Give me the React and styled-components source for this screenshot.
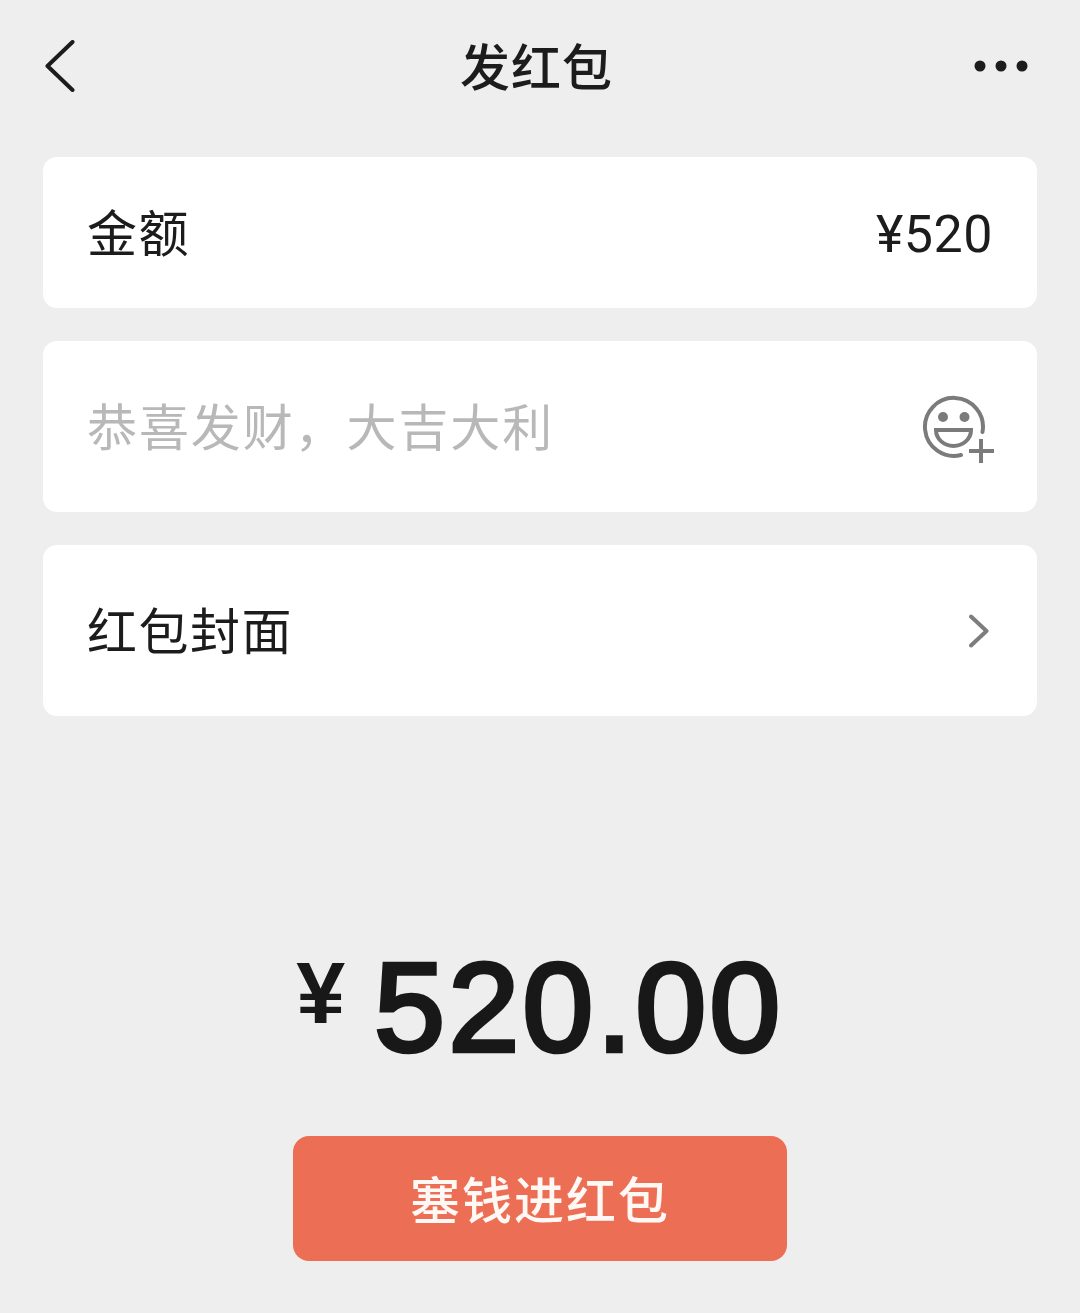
import React from 'react';
import styled, { createGlobalStyle } from 'styled-components';

const GlobalStyle = createGlobalStyle`
  html, body {
    margin: 0;
    padding: 0;
    background: #eeeeee;
  }
  body {
    font-family: "Noto Sans CJK SC", "Noto Sans", sans-serif;
  }
`;

const Page = styled.div`
  width: 1080px;
  height: 1313px;
  background: #eeeeee;
  overflow: hidden;
  display: flex;
  flex-direction: column;
  align-items: center;
`;

const Header = styled.header`
  width: 100%;
  height: 157px;
  box-sizing: border-box;
  padding: 0 52px 26px 45px;
  display: grid;
  grid-template-columns: 1fr auto 1fr;
  align-items: center;
`;

const Title = styled.h1`
  margin: 0 0 4px;
  font-size: 50px;
  line-height: 60px;
  font-weight: 500;
  letter-spacing: 1px;
  color: #1c1c1c;
`;

const MoreSlot = styled.div`
  display: flex;
  justify-content: flex-end;
`;

const CardList = styled.div`
  display: flex;
  flex-direction: column;
  gap: 33px;
  width: 994px;
`;

const Card = styled.div`
  height: ${(p) => p.$height}px;
  box-sizing: border-box;
  padding: 0 44px;
  background: #ffffff;
  border-radius: 14px;
  display: flex;
  align-items: center;
  justify-content: space-between;
`;

const Label = styled.span`
  padding-bottom: 6px;
  font-size: 50px;
  line-height: 60px;
  letter-spacing: ${(p) => (p.$muted ? '1.9px' : '1.5px')};
  color: ${(p) => (p.$muted ? '#b8b8b8' : '#1c1c1c')};
`;

const Price = styled.span`
  padding-top: 3px;
  font-family: Roboto, sans-serif;
  font-size: 52px;
  letter-spacing: 0.5px;
  color: #1c1c1c;
`;

const Total = styled.div`
  margin-top: 239px;
  height: 110px;
  display: flex;
  align-items: flex-start;
  gap: 29px;
  color: #181818;
  font-family: "Liberation Sans", Arial, sans-serif;
`;

const Currency = styled.span`
  margin-top: -4px;
  font-size: 88px;
  line-height: 84px;
  font-weight: 700;
`;

const Digits = styled.span`
  font-size: 127px;
  line-height: 104px;
  letter-spacing: 3.5px;
  -webkit-text-stroke: 4.5px #181818;
`;

const SubmitButton = styled.button`
  margin-top: 71px;
  width: 494px;
  height: 125px;
  padding: 0 0 4px;
  border: none;
  border-radius: 16px;
  background: #ec6e54;
  color: #fff8f4;
  font-family: inherit;
  font-size: 50px;
  line-height: 60px;
  font-weight: 500;
  letter-spacing: 2px;
`;

const Icon = styled.svg`
  flex: none;
  margin-right: ${(p) => p.$right || 0}px;
`;

const BackIcon = () => (
  <Icon width="30" height="52" viewBox="0 0 30 52" fill="none">
    <path d="M27.500 2 2.500 26l25 24" stroke="#1c1c1c" strokeWidth="4" strokeLinecap="round" strokeLinejoin="round" />
  </Icon>
);

const MoreIcon = () => (
  <Icon width="54" height="14" viewBox="0 0 54 14" fill="#1c1c1c">
    <circle cx="6" cy="7" r="5.500" />
    <circle cx="27" cy="7" r="5.500" />
    <circle cx="48" cy="7" r="5.500" />
  </Icon>
);

const EmojiIcon = () => (
  <Icon $right={-2} width="73" height="73" viewBox="922 390 73 73" fill="none" stroke="#7b7b7b" strokeWidth="4">
    <path d="M982.500 432A29 29 0 1 0 961 455" strokeLinecap="round" />
    <circle cx="943" cy="417" r="5" fill="#7b7b7b" stroke="none" />
    <circle cx="964.500" cy="417" r="5" fill="#7b7b7b" stroke="none" />
    <path d="M936 430h35c0 9-8 16-17.500 16S936 439 936 430Z" />
    <path d="M969 451h25M981 439v24" />
  </Icon>
);

const ChevronIcon = () => (
  <Icon $right={4} width="20" height="36" viewBox="0 0 20 36" fill="none">
    <path d="M2 3.500 17.500 18 2 32.500" stroke="#7d7d7d" strokeWidth="4" strokeLinecap="round" strokeLinejoin="round" />
  </Icon>
);

export default function App() {
  return (
    <Page>
      <GlobalStyle />
      <Header>
        <BackIcon />
        <Title>发红包</Title>
        <MoreSlot>
          <MoreIcon />
        </MoreSlot>
      </Header>
      <CardList>
        <Card $height={151}>
          <Label>金额</Label>
          <Price>¥520</Price>
        </Card>
        <Card $height={171}>
          <Label $muted>恭喜发财，大吉大利</Label>
          <EmojiIcon />
        </Card>
        <Card $height={171}>
          <Label>红包封面</Label>
          <ChevronIcon />
        </Card>
      </CardList>
      <Total>
        <Currency>¥</Currency>
        <Digits>520.00</Digits>
      </Total>
      <SubmitButton>塞钱进红包</SubmitButton>
    </Page>
  );
}
